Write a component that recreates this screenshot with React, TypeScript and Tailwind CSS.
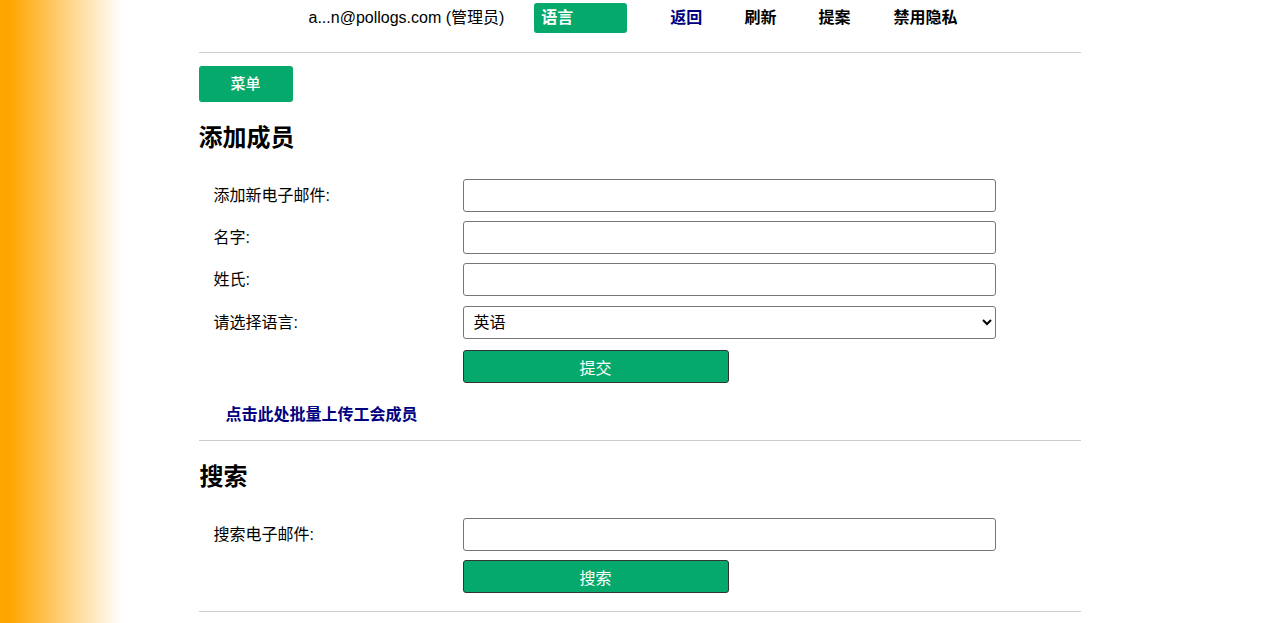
import React from 'react';

const font = { fontFamily: '"Liberation Sans", "Noto Sans CJK SC", sans-serif' };

const FormRow: React.FC<{ label: string; children: React.ReactNode }> = ({ label, children }) => (
  <div className="flex items-center h-[33px]">
    <div className="w-[264px] pl-[15px] text-[16px] text-black">{label}</div>
    <div className="w-[533px]">{children}</div>
  </div>
);

const TextInput = () => (
  <input
    type="text"
    className="block w-[533px] h-[33px] border border-[#767676] rounded-[3px] bg-white px-2 text-[16px] outline-none"
  />
);

const SubmitButton: React.FC<{ label: string }> = ({ label }) => (
  <div className="flex h-[33px]">
    <div className="w-[264px]" />
    <button className="w-[266px] h-[33px] bg-[#05a96b] border border-[#333] rounded-[3px] text-white text-[16px] pt-[5px]">
      {label}
    </button>
  </div>
);

export default function App() {
  return (
    <div
      className="min-h-screen bg-[linear-gradient(to_right,#ffa500_10px,#ffffff_122px)]"
      style={font}
    >
      <div className="w-[882px] mx-auto">
        {/* header */}
        <div className="h-[52px] pt-[3px] pl-[110px] flex items-start">
          <div className="flex items-center h-[30px]">
            <span className="text-[16px] text-black">a...n@pollogs.com (管理员)</span>
            <button className="ml-[30px] w-[93px] h-[30px] bg-[#05a96b] rounded-[3px] text-white font-bold text-[16px] text-left pl-[7px]">
              语言
            </button>
            <a className="ml-[43px] font-bold text-[16px] text-[#00007f]">返回</a>
            <a className="ml-[42px] font-bold text-[16px] text-black">刷新</a>
            <a className="ml-[42px] font-bold text-[16px] text-black">提案</a>
            <a className="ml-[43px] font-bold text-[16px] text-black">禁用隐私</a>
          </div>
        </div>
        <div className="border-t border-[#cccccc]" />

        <button className="mt-[13px] w-[94px] h-[36px] bg-[#05a96b] rounded-[3px] text-white text-[15px] font-medium">
          菜单
        </button>

        <h2 className="mt-[20px] text-[24px] leading-[32px] font-bold text-black">添加成员</h2>

        <div className="mt-[25px] flex flex-col gap-[9px]">
          <FormRow label="添加新电子邮件:">
            <TextInput />
          </FormRow>
          <FormRow label="名字:">
            <TextInput />
          </FormRow>
          <FormRow label="姓氏:">
            <TextInput />
          </FormRow>
          <div className="mt-[1px]">
            <FormRow label="请选择语言:">
              <select className="block w-[533px] h-[33px] border border-[#767676] rounded-[3px] bg-white pl-[6px] text-[16px] text-black">
                <option>英语</option>
                <option>中文</option>
              </select>
            </FormRow>
          </div>
          <div className="mt-[2px]">
            <SubmitButton label="提交" />
          </div>
        </div>

        <div className="mt-[20px] pl-[27px] leading-[24px]">
          <a className="font-bold text-[16px] text-[#00007f]">点击此处批量上传工会成员</a>
        </div>
        <div className="mt-[13px] border-t border-[#cccccc]" />

        <h2 className="mt-[20px] pl-px text-[24px] leading-[32px] font-bold text-black">搜索</h2>

        <div className="mt-[25px] flex flex-col gap-[9px]">
          <FormRow label="搜索电子邮件:">
            <TextInput />
          </FormRow>
          <SubmitButton label="搜索" />
        </div>
        <div className="mt-[18px] border-t border-[#cccccc]" />
        <div className="h-[40px]" />
      </div>
    </div>
  );
}
